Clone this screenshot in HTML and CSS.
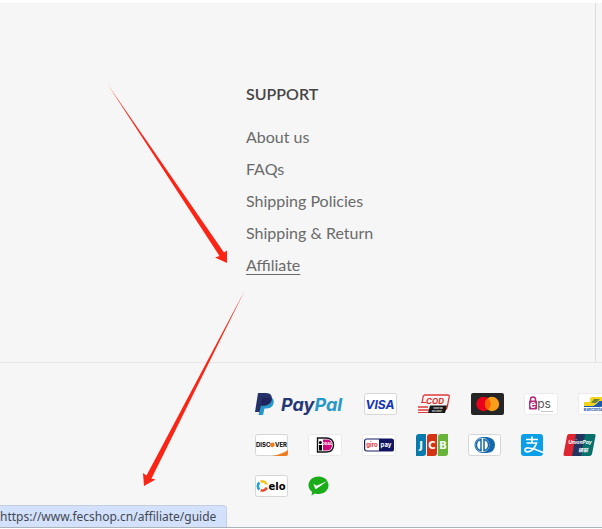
FILE: index.html
```html
<!DOCTYPE html>
<html lang="en">
	<head>
		<meta charset="utf-8">
		<title>Fecshop</title>
		<link rel="stylesheet" href="styles.css">
	</head>
	<body>
		<footer class="footer">
			<div class="footer-main">
				<nav class="support">
					<h2>SUPPORT</h2>
					<ul>
						<li><a href="#about">About us</a></li>
						<li><a href="#faqs">FAQs</a></li>
						<li><a href="#policies">Shipping Policies</a></li>
						<li><a href="#return">Shipping &amp; Return</a></li>
						<li><a class="cur" href="#affiliate">Affiliate</a></li>
					</ul>
				</nav>
			</div>
			<div class="footer-bottom">
				<ul class="payments">
					<li>
						<svg width="89" height="22" viewBox="0 0 89 22" role="img" aria-label="PayPal">
							<path d="M7 4h8c3 1 4.500 3 3.500 6.500-1 4-4 5-8 5H9.500L8 22H3.500z" fill="#2997c8"/>
							<path d="M3 0h8c5 0 6.500 3 5.500 7-1 4-4 5.500-8 5.500H6L4.500 19H0z" fill="#253268"/>
							<path d="M7 4.500h9.500c.8 4-2 7.500-7 8H6z" fill="#20245c"/>
							<text class="t-paypal" x="26" y="18" fill="#253875">Pay<tspan fill="#2997c8">Pal</tspan></text>
						</svg>
					</li>
					<li>
						<svg width="33" height="22" viewBox="0 0 33 22" role="img" aria-label="Visa">
							<rect class="card" x=".5" y=".5" width="32" height="21" rx="2"/>
							<text class="t-visa" x="16" y="16" fill="#1434b8">VISA</text>
						</svg>
					</li>
					<li>
						<svg width="34" height="22" viewBox="0 0 34 22" role="img" aria-label="Cash on delivery">
							<path d="M7 2h23.500q2 0 1.700 2L30 15q-.5 2-3 2H3.500M6.500 2 5 10M1 14h10M1 17h10" fill="none" stroke="#e23a3a" stroke-width="1.300"/>
							<path d="M4 9.500h5M1 19.500h10" stroke="#e23a3a"/>
							<text class="t-cod" x="18" y="11" fill="#e12b2b">COD</text>
							<path d="M13 12.500h17l-2 7.500H11z" fill="#171717"/>
							<text class="t-tiny" x="21" y="16" fill="#fff">CASH ON</text>
							<text class="t-tiny" x="20" y="19" fill="#eee">DELIVERY</text>
						</svg>
					</li>
					<li>
						<svg width="33" height="22" viewBox="0 0 33 22" role="img" aria-label="Mastercard">
							<rect width="33" height="22" rx="2" fill="#252525"/>
							<circle cx="12.500" cy="11" r="7.200" fill="#eb001b"/>
							<circle cx="21" cy="11" r="7.200" fill="#f79e1b"/>
							<path d="M16.750 5.200a7.200 7.200 0 0 1 0 11.600 7.200 7.200 0 0 1 0-11.600z" fill="#ff5f00"/>
						</svg>
					</li>
					<li>
						<svg width="34" height="22" viewBox="0 0 34 22" role="img" aria-label="eps">
							<rect class="card light" x=".5" y=".5" width="33" height="21" rx="2"/>
							<path d="M6.500 8V6.500a2.500 2.500 0 0 1 5 0V8" fill="none" stroke="#b5287a" stroke-width="1.500"/>
							<rect x="5" y="7.500" width="8" height="9" rx="1" fill="#b5287a"/>
							<text class="t-eps" x="9" y="15" fill="#fff">e</text>
							<text class="t-eps big" x="20" y="15" fill="#555">ps</text>
							<path d="M17 18.500h12" stroke="#c8c8c8"/>
						</svg>
					</li>
					<li>
						<svg width="34" height="22" viewBox="0 0 34 22" role="img" aria-label="Bancontact">
							<rect class="card light" x=".5" y=".5" width="33" height="21" rx="2"/>
							<path d="M6 13h7q3 0 5-2l3-3h8l-3 4q-2 2-5 2H6z" fill="#1e5aa8"/>
							<path d="M12 5q1-1 3-1h14v4h-8l-3 3q-2 2-5 2H6V9h5q1 0 1-2z" fill="#f3d51c"/>
							<path d="M16 6h6l-4 4h-5z" fill="#6f8438"/>
							<text class="t-small" x="17" y="18" fill="#1e5aa8">Bancontact</text>
						</svg>
					</li>
					<li>
						<svg width="33" height="22" viewBox="0 0 33 22" role="img" aria-label="Discover">
							<rect class="card" x=".5" y=".5" width="32" height="21" rx="2"/>
							<path d="M33 16v4q0 2-2 2H17q10-2 16-6z" fill="#ee7d23"/>
							<text class="t-discover" x="1" y="13">DISC</text>
							<circle cx="17.300" cy="10.800" r="2.400" fill="#ee7d23"/>
							<text class="t-discover" x="20" y="13">VER</text>
						</svg>
					</li>
					<li>
						<svg width="34" height="22" viewBox="0 0 34 22" role="img" aria-label="iDEAL">
							<rect class="card light" x=".5" y=".5" width="33" height="21" rx="2"/>
							<path d="M9.500 4H18q7.500 0 7.500 7T18 18H9.500z" fill="#fff" stroke="#151515" stroke-width="1.400"/>
							<path d="M15 5.500h3.500q5.500 0 5.500 5.500t-5.500 5.500H15z" fill="#cc0a7b"/>
							<circle cx="12.400" cy="8.500" r="1.500"/>
							<path d="M11 11h3v5.500h-3z"/>
							<text class="t-ideal" x="19.300" y="11" fill="#fff">DEAL</text>
						</svg>
					</li>
					<li>
						<svg width="34" height="22" viewBox="0 0 34 22" role="img" aria-label="giropay">
							<rect class="card light" x=".5" y=".5" width="33" height="21" rx="2"/>
							<rect x="2.600" y="5" width="28.800" height="12" rx="2" fill="#fff" stroke="#151b66" stroke-width="1.200"/>
							<path d="M17 5h13q1.500 0 1.500 1.500v9q0 1.500-1.500 1.500H17z" fill="#10145f"/>
							<text class="t-giro" x="10" y="13" fill="#e12d38">giro</text>
							<text class="t-giro" x="24" y="13" fill="#fff">pay</text>
						</svg>
					</li>
					<li>
						<svg width="32" height="22" viewBox="0 0 32 22" role="img" aria-label="JCB">
							<path d="M3 0h7v19q0 3-3 3H0V3q0-3 3-3z" fill="#087bac"/>
							<path d="M14 0h7v19q0 3-3 3h-7V3q0-3 3-3z" fill="#d33414"/>
							<path d="M25 0h7v19q0 3-3 3h-7V3q0-3 3-3z" fill="#68b33a"/>
							<text class="t-jcb" x="5" y="15">J</text>
							<text class="t-jcb" x="16" y="15">C</text>
							<text class="t-jcb" x="27" y="15">B</text>
						</svg>
					</li>
					<li>
						<svg width="33" height="22" viewBox="0 0 33 22" role="img" aria-label="Diners Club">
							<rect class="card" x=".5" y=".5" width="32" height="21" rx="2"/>
							<path d="M14 3h5q8 1 8 8T19 19h-5z" fill="#1368ad"/>
							<circle cx="14.500" cy="11" r="7.500" fill="#fff" stroke="#1368ad"/>
							<path d="M13 5.500a5.600 5.600 0 0 0 0 11zM16 5.500a5.600 5.600 0 0 1 0 11z" fill="#fff" stroke="#1368ad" stroke-width="1.500"/>
						</svg>
					</li>
					<li>
						<svg width="22" height="22" viewBox="0 0 22 22" role="img" aria-label="Alipay">
							<rect width="22" height="22" rx="3" fill="#0b9fe8"/>
							<path d="M5 5.500h12M11 2.500v6.500M5.500 9h10q-2 6-6 8-5 2-5.500-1 0-2.500 4-2 5 .5 14 4.500" fill="none" stroke="#fff" stroke-width="1.700"/>
						</svg>
					</li>
					<li>
						<svg width="33" height="22" viewBox="0 0 33 22" role="img" aria-label="UnionPay">
							<path d="M6 0h9l-5 22H2q-2 0-1.500-2L4 2q.5-2 2-2z" fill="#dd2632"/>
							<path d="M13 0h10l-4 22H9z" fill="#23345f"/>
							<path d="M22 0h9q2 0 1.500 2L29 20q-.5 2-2.500 2H18z" fill="#08706c"/>
							<text class="t-union" x="17" y="10">UnionPay</text>
							<text class="t-union cjk" x="20" y="18">银联</text>
						</svg>
					</li>
					<li>
						<svg width="33" height="22" viewBox="0 0 33 22" role="img" aria-label="Elo">
							<rect class="card" x=".5" y=".5" width="32" height="21" rx="2"/>
							<g fill="none" stroke-width="2.600">
								<path d="M5.500 6.800a4.500 4.500 0 0 1 6.200 2.700" stroke="#f2c52a"/>
								<path d="M4.500 7.500a4.500 4.500 0 0 0 0 7" stroke="#1ba4da"/>
								<path d="M11.700 12.500a4.500 4.500 0 0 1-6 2.700" stroke="#e8492d"/>
							</g>
							<text class="t-elo" x="22" y="15">elo</text>
						</svg>
					</li>
					<li>
						<svg width="22" height="22" viewBox="0 0 22 22" role="img" aria-label="WeChat Pay">
							<path d="M10.500 1.500c6 0 10 4 10 8.800s-4 8.700-10 8.700q-2 0-3.500-.5L3.500 20.500l.7-3.500Q.5 14.500.5 10.300c0-4.800 4-8.800 10-8.800z" fill="#1aad19"/>
							<path d="M5.500 8.800l3 2L19 6.200 8.500 13.800q-1 .4-1.500-.6z" fill="#fff"/>
						</svg>
					</li>
				</ul>
			</div>
		</footer>
		<svg class="arrows" width="260" height="500" viewBox="0 0 260 500" aria-hidden="true">
			<path d="M108 85L224 252.500 227 250.500V263L215 257.500 219.500 256z"/>
			<path d="M245 290L151.500 478.500 155.500 479.500 144 486 143 473 146.500 475.500z"/>
		</svg>
		<div class="status">https://www.fecshop.cn/affiliate/guide</div>
	</body>
</html>
```
FILE: styles.css
```css
body,ul,h2{
	margin: 0;
	padding: 0;
}
ul{
	list-style: none;
}
body{
	min-height: 100vh;
	box-sizing: border-box;
	padding-top: 3px;
	display: flex;
	flex-direction: column;
	position: relative;
	overflow: hidden;
	background-color: #fff;
	font-family: Lato, "Liberation Sans", sans-serif;
}
.footer{
	flex: 1;
	display: flex;
	flex-direction: column;
	background-color: #f6f6f6;
	border-bottom: 1px solid #a9b4bb;
	margin-bottom: 1px;
}
.footer-main{
	margin-right: 6px;
	padding: 79px 0 81px 246px;
	border-right: 1px solid #dcdcdc;
}
.support h2{
	margin-bottom: 15px;
	color: #444;
	font-size: 16px;
	line-height: 24px;
	font-weight: 600;
}
.support li{
	line-height: 32px;
}
.support a{
	color: #6a6a6a;
	font-size: 16px;
	text-decoration: none;
}
.support a:hover,
.support .cur{
	text-decoration: underline;
	text-underline-offset: 3px;
}
.footer-bottom{
	flex: 1;
	padding: 30px 0 30px 255px;
	border-top: 1px solid #e6e6e6;
}
/* 付款方式 */
.payments{
	width: 360px;
	display: flex;
	flex-wrap: wrap;
	gap: 19px 20px;
}
.payments svg{
	display: block;
}
.payments text{
	font-family: Inter, "Liberation Sans", sans-serif;
	font-weight: bold;
	text-anchor: middle;
}
.card{
	fill: #fff;
	stroke: #d6d6d6;
}
.light{
	stroke: #ebebeb;
}
.payments .t-paypal{
	font-size: 18px;
	font-style: italic;
	text-anchor: start;
}
.payments .t-visa{
	font-size: 12px;
	font-style: italic;
}
.payments .t-cod{
	font-size: 8px;
	font-style: italic;
}
.payments .t-tiny{
	font-size: 2px;
}
.payments .t-small{
	font-size: 4px;
}
.payments .t-eps{
	font-size: 10px;
}
.payments .big{
	font-size: 12px;
	font-weight: normal;
}
.payments .t-discover{
	font-size: 6px;
	text-anchor: start;
}
.payments .t-ideal{
	font-size: 4px;
}
.payments .t-giro{
	font-size: 6px;
}
.payments .t-jcb{
	font-family: "DejaVu Sans", sans-serif;
	font-size: 10px;
	fill: #fff;
}
.payments .t-union{
	font-size: 5px;
	font-style: italic;
	fill: #fff;
}
.payments .cjk{
	font-family: "Noto Sans CJK SC", sans-serif;
}
.payments .t-elo{
	font-family: "DejaVu Sans", sans-serif;
	font-size: 10px;
}
.arrows{
	position: absolute;
	top: 0;
	left: 0;
	fill: #fb2415;
	pointer-events: none;
}
.status{
	position: absolute;
	left: 0;
	bottom: 2px;
	padding-right: 10px;
	border-top: 1px solid #c6cfdf;
	border-right: 1px solid #c6cfdf;
	border-top-right-radius: 4px;
	background-color: #d3e1fc;
	color: #444952;
	font-family: "Noto Sans", sans-serif;
	font-size: 12px;
	line-height: 21px;
}
```
